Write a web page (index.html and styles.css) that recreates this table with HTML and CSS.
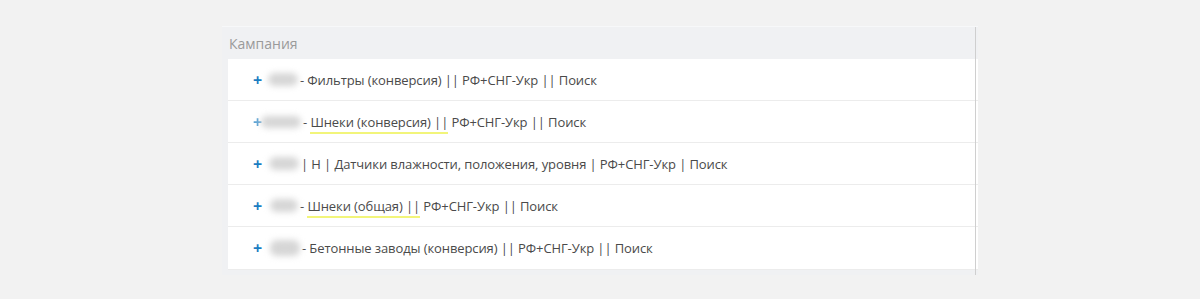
FILE: index.html
```html
<!DOCTYPE html>
<html lang="ru">
<head>
<meta charset="utf-8">
<link rel="stylesheet" href="styles.css">
</head>
<body>
<div class="panel">
  <div class="inner">
    <div class="head">Кампания</div>
    <div class="row">
      <span class="plus">+</span><span class="blob b1"></span><span class="txt">- Фильтры (конверсия) || РФ+СНГ-Укр || Поиск</span>
    </div>
    <div class="row">
      <span class="plus faded">+</span><span class="blob b2"></span><span class="txt">- <span class="mark">Шнеки (конверсия) ||</span> РФ+СНГ-Укр || Поиск</span>
    </div>
    <div class="row">
      <span class="plus">+</span><span class="blob b3"></span><span class="txt">| Н | Датчики влажности, положения, уровня | РФ+СНГ-Укр | Поиск</span>
    </div>
    <div class="row">
      <span class="plus">+</span><span class="blob b4"></span><span class="txt">- <span class="mark">Шнеки (общая) ||</span> РФ+СНГ-Укр || Поиск</span>
    </div>
    <div class="row">
      <span class="plus">+</span><span class="blob b5"></span><span class="txt">- Бетонные заводы (конверсия) || РФ+СНГ-Укр || Поиск</span>
    </div>
  </div>
</div>
</body>
</html>
```
FILE: styles.css
```css
html, body {
  margin: 0;
  padding: 0;
  background: #f2f2f2;
}
body {
  font-family: "Open Sans", "Noto Sans", sans-serif;
  padding: 26px 0 0 222px;
}
.panel {
  width: 756px;
  height: 249px;
  background: #f0f1f3;
  border-top: 1px solid #f7f8f9;
  box-sizing: border-box;
  padding-left: 6px;
  position: relative;
}
.panel::after {
  content: "";
  position: absolute;
  left: 753px;
  top: 0;
  width: 1px;
  height: 249px;
  background: #cfcfcf;
}
.inner {
  width: 750px;
}
.head {
  height: 32px;
  line-height: 33px;
  font-size: 14px;
  color: #9a9a9a;
  padding-left: 1px;
}
.row {
  height: 42px;
  background: #fff;
  border-bottom: 1px solid #ececec;
  box-sizing: border-box;
  display: flex;
  align-items: center;
  padding-left: 25px;
  font-size: 13px;
  color: #4a4a4a;
}
.row:last-child {
  height: 43px;
}
.plus {
  color: #1b7dc2;
  font-weight: 700;
  font-size: 16px;
  width: 14px;
  line-height: 1;
}
.plus.faded {
  opacity: 0.7;
  filter: blur(0.5px);
}
.blob {
  display: inline-block;
  height: 13px;
  background: #d6d6d6;
  border-radius: 7px;
  filter: blur(3px);
  margin-right: 2px;
}
.b1 { width: 30px; margin-left: 1px; }
.b2 { width: 40px; margin-left: -6px; height: 12px; }
.b3 { width: 30px; margin-left: 2px; }
.b4 { width: 28px; margin-left: 3px; }
.b5 { width: 30px; margin-left: 3px; height: 16px; }
.txt {
  white-space: nowrap;
  letter-spacing: -0.1px;
}
.mark {
  border-bottom: 2px solid #f2f57a;
  padding-bottom: 1px;
}
```
